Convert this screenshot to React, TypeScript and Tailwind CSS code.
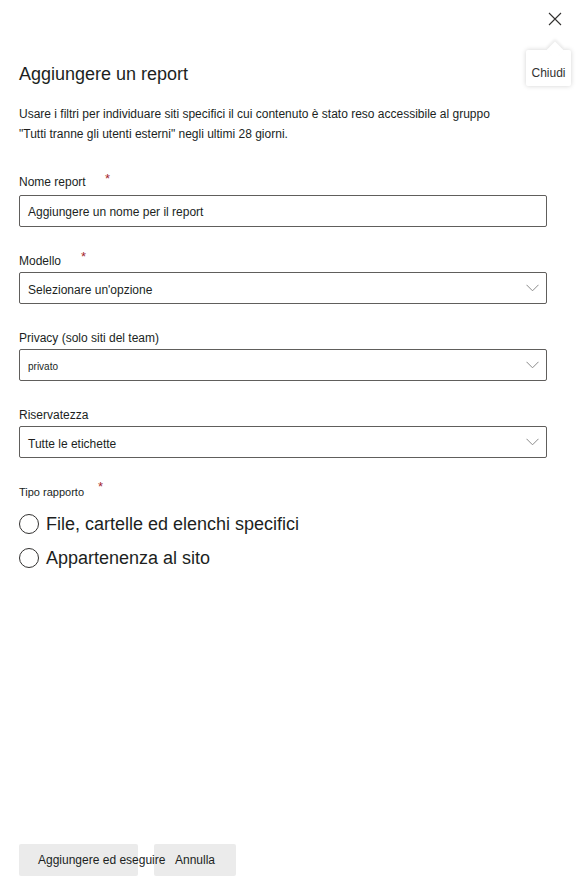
import React from "react";

const Chevron = () => (
  <svg width="13" height="8" viewBox="0 0 13 8" className="shrink-0">
    <path d="M0.5 0.8 L6.5 6.8 L12.5 0.8" fill="none" stroke="#8a8a8a" strokeWidth="1" />
  </svg>
);

const Star = ({ cls }: { cls: string }) => (
  <span className={"text-[#a4262c] text-[13px] leading-none absolute " + cls}>*</span>
);

const Select = ({ text, small }: { text: string; small?: boolean }) => (
  <div className="h-[32px] border border-[#605e5c] rounded-[2px] flex items-center pl-[8px] pr-[7px] justify-between">
    <span className={small ? "text-[10px] text-[#201f1e] pt-[2px]" : "text-[12px] text-[#201f1e] pt-[4px]"}>{text}</span>
    <Chevron />
  </div>
);

export default function App() {
  return (
    <div
      className="w-[578px] h-[885px] bg-white relative flex flex-col text-[#201f1e]"
      style={{ fontFamily: '"Liberation Sans", Arial, sans-serif' }}
    >
      {/* Close button */}
      <div className="absolute left-[548px] top-[12px]">
        <svg width="14" height="14" viewBox="0 0 14 14">
          <path d="M1 1 L13 13 M13 1 L1 13" stroke="#323130" strokeWidth="1.1" fill="none" />
        </svg>
      </div>
      {/* Tooltip */}
      <div className="absolute left-[526px] top-[50px] w-[45px] h-[36px] bg-white shadow-[0_0_5px_rgba(0,0,0,0.18)] rounded-[2px] flex items-center justify-center">
        <div className="absolute -top-[6px] left-[23px] w-[12px] h-[12px] bg-white rotate-45 shadow-[-2px_-2px_3px_rgba(0,0,0,0.08)]" />
        <span className="relative text-[12px] text-[#323130] mt-[9px]">Chiudi</span>
      </div>

      <div className="px-[19px] pt-[63px] flex flex-col">
        <h1 className="text-[18px] leading-[22px] text-[#201f1e]">Aggiungere un report</h1>
        <p className="mt-[19px] text-[12px] leading-[20px] w-[495px]">
          Usare i filtri per individuare siti specifici il cui contenuto è stato reso accessibile al gruppo "Tutti tranne gli utenti esterni" negli ultimi 28 giorni.
        </p>

        <div className="mt-[28px] relative">
          <label className="text-[12px] leading-[20px] block">Nome report</label>
          <Star cls="left-[86px] top-[0px]" />
        </div>
        <div className="mt-[3px] h-[32px] w-[528px] border border-[#605e5c] rounded-[2px] flex items-center pl-[8px]">
          <span className="text-[12px] pt-[2px]">Aggiungere un nome per il report</span>
        </div>

        <div className="mt-[24px] relative">
          <label className="text-[12px] leading-[20px] block">Modello</label>
          <Star cls="left-[62px] top-[-1px]" />
        </div>
        <div className="mt-[1px] w-[528px]">
          <Select text="Selezionare un'opzione" />
        </div>

        <div className="mt-[24px]">
          <label className="text-[12px] leading-[20px] block">Privacy (solo siti del team)</label>
        </div>
        <div className="mt-[1px] w-[528px]">
          <Select text="privato" small />
        </div>

        <div className="mt-[24px]">
          <label className="text-[12px] leading-[20px] block">Riservatezza</label>
        </div>
        <div className="mt-[1px] w-[528px]">
          <Select text="Tutte le etichette" />
        </div>

        <div className="mt-[24px] relative">
          <label className="text-[11px] leading-[20px] block">Tipo rapporto</label>
          <Star cls="left-[79px] top-[-2px]" />
        </div>
        <div className="mt-[12px] flex flex-col gap-[14px]">
          <div className="flex items-center gap-[7px]">
            <span className="w-[20px] h-[20px] rounded-full border border-[#323130] shrink-0" />
            <span className="text-[18px] leading-[20px]">File, cartelle ed elenchi specifici</span>
          </div>
          <div className="flex items-center gap-[7px]">
            <span className="w-[20px] h-[20px] rounded-full border border-[#323130] shrink-0" />
            <span className="text-[18px] leading-[20px]">Appartenenza al sito</span>
          </div>
        </div>
      </div>

      <div className="mt-auto mb-[9px] px-[19px] flex gap-[16px]">
        <div className="w-[119px] h-[32px] bg-[#ebebeb] rounded-[2px] flex items-center pl-[19px] whitespace-nowrap relative z-10">
          <span className="text-[12px]">Aggiungere ed eseguire</span>
        </div>
        <div className="w-[82px] h-[32px] bg-[#ebebeb] rounded-[2px] flex items-center justify-center">
          <span className="text-[12px]">Annulla</span>
        </div>
      </div>
    </div>
  );
}
